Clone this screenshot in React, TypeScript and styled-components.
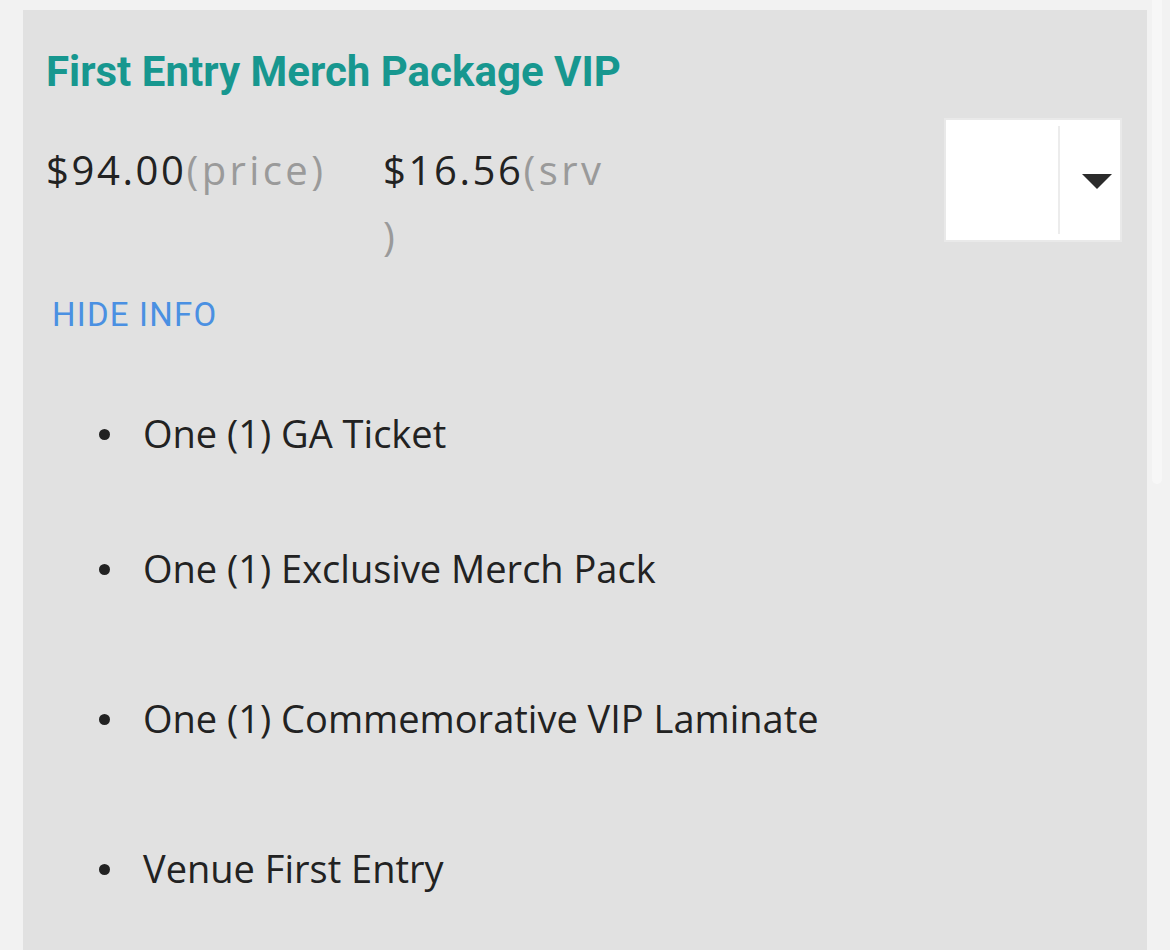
import styled, { createGlobalStyle } from "styled-components";

const GlobalStyle = createGlobalStyle`
  html, body {
    margin: 0;
    padding: 0;
    background: #f2f2f2;
    overflow: hidden;
  }
`;

const Page = styled.div`
  display: flex;
  padding: 10px 23px 0 23px;
  min-height: 940px;
`;

const Card = styled.section`
  flex: 1;
  background: #e1e1e1;
  padding: 38px 25px 40px 23px;
  min-height: 900px;
`;

const Title = styled.h2`
  margin: 0;
  font-family: Roboto, "Liberation Sans", sans-serif;
  font-weight: 700;
  font-size: 42px;
  line-height: 48px;
  color: #17978f;
`;

const PriceRow = styled.div`
  display: flex;
  align-items: flex-start;
  margin-top: 22px;
`;

const PriceCol = styled.div<{ $width: number }>`
  width: ${({ $width }) => $width}px;
  padding-top: 19px;
  font-family: "Open Sans", "Noto Sans", sans-serif;
  font-size: 40px;
  letter-spacing: 2.6px;
  line-height: 66px;
  color: #222;
`;

const PriceNote = styled.span`
  color: #9a9a9a;
  letter-spacing: 3.4px;
`;

const QtySelect = styled.div`
  margin-left: auto;
  width: 174px;
  height: 120px;
  background: #fff;
  border: 2px solid #e9e9e9;
  display: flex;
  align-items: center;
`;

const QtyValue = styled.div`
  flex: 1;
  height: 108px;
  border-right: 2px solid #ececec;
`;

const QtyArrow = styled.div`
  box-sizing: border-box;
  width: 60px;
  padding: 2px 8px 0 22px;
  display: flex;
`;

const ToggleInfo = styled.button`
  display: block;
  margin: 26px 0 0 6px;
  padding: 0;
  border: none;
  background: none;
  font-family: Roboto, "Liberation Sans", sans-serif;
  font-size: 33px;
  letter-spacing: 1.2px;
  line-height: 40px;
  color: #4a90e2;
  cursor: pointer;
`;

const PerkList = styled.ul`
  margin: 73px 0 0 0;
  padding: 0 0 0 97px;
  list-style: none;
`;

const Perk = styled.li<{ $gap: number }>`
  position: relative;
  margin-top: ${({ $gap }) => $gap}px;
  font-family: "Open Sans", "Noto Sans", sans-serif;
  font-size: 38px;
  line-height: 50px;
  color: #222;

  &::before {
    content: "";
    position: absolute;
    left: -44px;
    top: 21px;
    width: 11px;
    height: 11px;
    border-radius: 50%;
    background: #222;
  }
`;

const ScrollThumb = styled.div`
  position: fixed;
  top: 0;
  right: 8px;
  width: 10px;
  height: 484px;
  border-radius: 0 0 5px 5px;
  background: #f7f7f7;
`;

const perks = [
  "One (1) GA Ticket",
  "One (1) Exclusive Merch Pack",
  "One (1) Commemorative VIP Laminate",
  "Venue First Entry",
];

const gaps = [0, 85, 100, 100];

export default function App() {
  return (
    <>
      <GlobalStyle />
      <Page>
        <Card>
          <Title>First Entry Merch Package VIP</Title>
          <PriceRow>
            <PriceCol $width={337}>
              $94.00<PriceNote>(price)</PriceNote>
            </PriceCol>
            <PriceCol $width={226}>
              $16.56<PriceNote>(srv )</PriceNote>
            </PriceCol>
            <QtySelect>
              <QtyValue />
              <QtyArrow>
                <svg width="30" height="15" viewBox="0 0 30 15">
                  <path d="M0 0 L30 0 L15 15 Z" fill="#2b2b2b" />
                </svg>
              </QtyArrow>
            </QtySelect>
          </PriceRow>
          <ToggleInfo>HIDE INFO</ToggleInfo>
          <PerkList>
            {perks.map((p, i) => (
              <Perk key={p} $gap={gaps[i]}>
                {p}
              </Perk>
            ))}
          </PerkList>
        </Card>
      </Page>
      <ScrollThumb />
    </>
  );
}
